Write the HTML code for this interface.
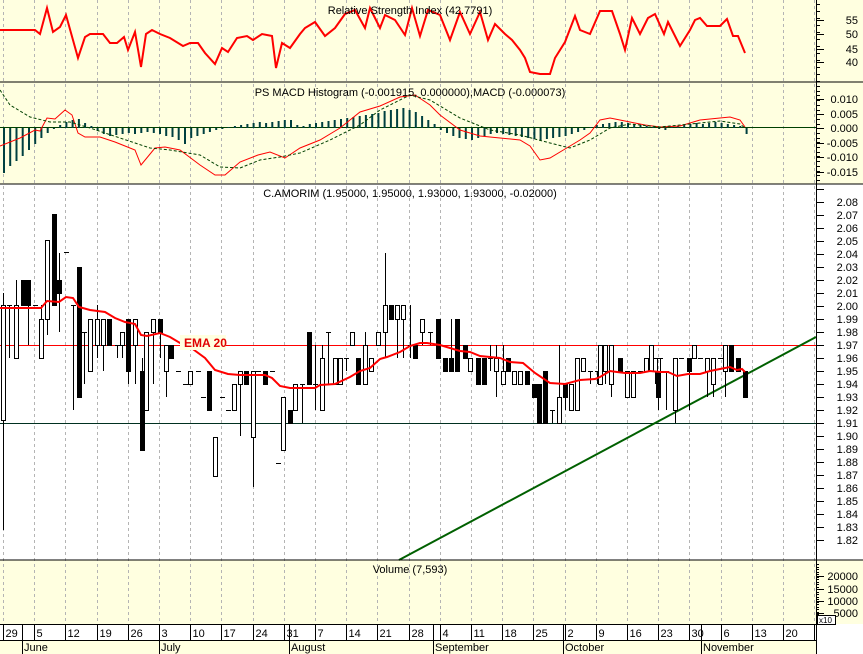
<!DOCTYPE html>
<html><head><meta charset="utf-8"><style>
html,body{margin:0;padding:0;background:#fff;width:863px;height:654px;overflow:hidden}
svg{display:block}
text{font-family:"Liberation Sans",Arial,sans-serif;font-size:11px;fill:#000}
</style></head><body>
<svg id="c" width="863" height="654" xmlns="http://www.w3.org/2000/svg">
<rect x="0" y="0" width="863" height="82" fill="#ffffe0"/>
<rect x="0" y="82" width="863" height="102" fill="#ffffe0"/>
<rect x="0" y="184" width="863" height="376" fill="#fff"/>
<rect x="0" y="560" width="863" height="64" fill="#ffffe0"/>
<rect x="0" y="624" width="816" height="16" fill="#fff"/>
<rect x="0" y="640" width="816" height="14" fill="#ffffe0"/>
<g id="grid"></g>
<g id="dyn"></g>
<line x1="0" y1="82" x2="863" y2="82" stroke="#000"/>
<line x1="0" y1="184" x2="863" y2="184" stroke="#000"/>
<line x1="0" y1="560" x2="863" y2="560" stroke="#000"/>
<line x1="0" y1="624.5" x2="816" y2="624.5" stroke="#000"/>
<line x1="0" y1="640.5" x2="816" y2="640.5" stroke="#000"/>
<line x1="816.5" y1="0" x2="816.5" y2="654" stroke="#000"/>
<text x="410" y="14" text-anchor="middle">Relative Strength Index (42.7791)</text>
<text x="410" y="96" text-anchor="middle">PS MACD Histogram (-0.001915, 0.000000),MACD (-0.000073)</text>
<text x="410" y="197" text-anchor="middle">C.AMORIM (1.95000, 1.95000, 1.93000, 1.93000, -0.02000)</text>
<text x="410" y="573" text-anchor="middle">Volume (7,593)</text>
<rect x="180" y="335" width="46" height="15" fill="#ffffe0"/>
<text x="184" y="347" style="font-weight:bold;font-size:12px;fill:#e00000">EMA 20</text>
<rect x="817.5" y="615.5" width="18" height="9" fill="#fff" stroke="#000"/>
<text x="819" y="623" style="font-size:8px">x10</text>
</svg>
<script>
var NS="http://www.w3.org/2000/svg",G=document.getElementById('grid'),D=document.getElementById('dyn');
function el(p,t,a){var e=document.createElementNS(NS,t);for(var k in a)e.setAttribute(k,a[k]);p.appendChild(e);return e}
function txt(p,x,y,s,anc){var e=el(p,'text',{x:x,y:y});if(anc)e.setAttribute('text-anchor',anc);e.textContent=s;return e}
// grid
for(var i=0;i<27;i++){var x=Math.round(3+31.2*i)+.5;
 el(G,'line',{x1:x,y1:0,x2:x,y2:624,stroke:'#b4b4b4','stroke-dasharray':'3,3'});}
// week row
var wk=["29","5","12","19","26","3","10","17","24","31","7","14","21","28","4","11","18","25","2","9","16","23","30","6","13","20"];
for(var i=0;i<27;i++){var x=Math.round(3+31.2*i)+.5;el(D,'line',{x1:x,y1:624,x2:x,y2:640,stroke:'#000'});if(i<26)txt(D,x+2,637,wk[i]);}
var mo=[[22,"June"],[159,"July"],[289,"August"],[433,"September"],[563,"October"],[701,"November"]];
mo.forEach(function(m){el(D,'line',{x1:m[0]+.5,y1:624,x2:m[0]+.5,y2:654,stroke:'#000'});txt(D,m[0]+2,651,m[1]);});
// axes ticks & labels
function tick(y,len){el(D,'line',{x1:816,y1:y+.5,x2:816+len,y2:y+.5,stroke:'#000'})}
for(var y=4;y<82;y+=7)tick(y,4);
[[55,20],[50,34],[45,49],[40,62]].forEach(function(a){tick(a[1],8);txt(D,858,a[1]+4,a[0],'end')});
for(var y=86;y<184;y+=4.7)tick(Math.round(y),4);
[["0.010",99],["0.005",114],["0.000",128],["-0.005",143],["-0.010",157],["-0.015",172]].forEach(function(a){tick(a[1],8);txt(D,858,a[1]+4,a[0],'end')});
function py(p){return 345+(1.97-p)*1300}
for(var k=0;k<=27;k++){var p=2.09-k*0.01;var y=Math.round(py(p));if(y<188||y>558)continue;tick(y,8);if(p<=2.085&&p>=1.815)txt(D,858,y+4,p.toFixed(2),'end');}
for(var y=564;y<624;y+=2.5)tick(Math.round(y),3);
[["20000",576],["15000",589],["10000",601],["5000",613]].forEach(function(a){tick(a[1],8);txt(D,858,a[1]+4,a[0],'end')});
// RSI
var rsi=[[0,30],[35,30],[40,34],[47,8],[53,32],[60,27],[66,15],[78,58],[85,37],[90,34],[103,34],[110,43],[117,43],[124,37],[128,50],[135,32],[141,67],[146,34],[152,30],[160,34],[170,38],[183,46],[190,43],[198,43],[205,53],[215,64],[222,48],[228,52],[237,38],[247,36],[253,40],[262,34],[272,36],[276,68],[282,43],[290,48],[300,34],[305,28],[315,22],[325,36],[335,28],[345,14],[355,10],[365,28],[370,8],[380,28],[385,15],[395,20],[405,35],[412,8],[420,36],[428,10],[440,15],[450,40],[460,12],[470,34],[480,12],[488,40],[495,24],[505,34],[512,40],[520,50],[525,58],[530,72],[540,74],[550,74],[555,58],[565,42],[575,16],[580,30],[590,34],[600,11],[612,11],[620,34],[625,50],[632,18],[640,34],[648,18],[655,14],[664,34],[668,22],[680,46],[690,30],[695,20],[700,18],[707,26],[720,26],[727,19],[733,36],[738,36],[745,53]];
function pl(pts,a){a.points=pts.map(function(p){return p.join(',')}).join(' ');a.fill='none';return el(D,'polyline',a)}
pl(rsi,{stroke:'#f00','stroke-width':2});
// MACD histogram
el(D,'line',{x1:0,y1:127.5,x2:816,y2:127.5,stroke:'#004000'});
var hv=[-45,-38,-33,-28,-22,-16,-10,-5,-1,3,6,8,9,5,2,-3,-6,-8,-7,-6,-5,-6,-5,-4,-5,-6,-8,-9,-12,-16,-10,-8,-6,-4,-2,-1,1,2,3,4,5,6,5,6,7,8,8,3,2,4,5,6,7,8,9,10,11,12,13,14,15,17,18,19,20,18,16,12,8,4,-2,-5,-8,-10,-11,-12,-10,-8,-6,-5,-6,-7,-8,-9,-10,-11,-12,-11,-10,-9,-8,-6,-4,-2,1,3,4,5,6,6,5,4,3,2,1,-1,-2,1,2,3,4,5,4,5,6,5,4,3,2,-6];
for(var d=0;d<hv.length;d++){var x=3+d*6.24;var h=hv[d];el(D,'rect',{x:x.toFixed(1),y:h<0?128:128-h,width:2,height:Math.abs(h)||1,fill:'#004040'});}
pl([[0,146],[20,138],[35,130],[40,131],[47,118],[55,119],[65,110],[72,115],[78,133],[85,137],[100,137],[115,142],[125,146],[135,150],[141,165],[155,148],[165,147],[180,150],[200,165],[215,175],[225,175],[240,162],[258,155],[270,152],[285,158],[300,148],[320,140],[340,128],[360,112],[380,106],[400,97],[415,95],[430,105],[440,115],[460,130],[480,136],[500,138],[520,140],[530,146],[540,160],[550,158],[570,146],[580,140],[590,133],[600,120],[610,118],[630,122],[645,125],[660,127],[680,126],[700,120],[720,118],[730,117],[740,120],[745,127]],{stroke:'#f00','stroke-width':1});
pl([[0,90],[10,105],[30,117],[50,122],[70,122],[90,128],[120,138],[150,148],[170,150],[200,155],[220,167],[240,168],[260,160],[280,157],[300,153],[330,140],[360,125],[380,110],[410,95],[430,100],[460,118],[490,130],[520,135],[550,143],[570,148],[590,140],[610,128],[630,124],[660,127],[690,124],[720,121],[740,124],[745,128]],{stroke:'#004000','stroke-width':1,'stroke-dasharray':'3,2'});
// price lines
el(D,'line',{x1:0,y1:345.5,x2:816,y2:345.5,stroke:'#f00'});
el(D,'line',{x1:0,y1:423.5,x2:816,y2:423.5,stroke:'#003020'});
el(D,'line',{x1:399,y1:560,x2:816,y2:337,stroke:'#006000','stroke-width':2});
// candles: x, bodyTop, bodyBot, high, low, filled(1)/hollow(0)/tick(2)
var C=[[3,305,420,293,530,0],[9,305,306,305,358,2],[16,305,358,280,358,0],[23,280,305,280,305,1],[28,280,305,280,345,1],[35,305,306,305,306,2],[41,319,358,305,358,0],[47,240,319,240,335,0],[54,214,305,214,305,1],[59,280,293,253,332,1],[66,252,253,252,253,2],[73,305,306,305,410,2],[79,267,397,267,397,1],[84,332,333,332,384,2],[90,319,371,319,371,0],[97,319,345,305,358,0],[103,319,345,319,371,0],[109,319,345,319,345,1],[117,345,346,345,358,2],[122,332,345,332,358,0],[128,319,371,319,384,1],[135,319,345,319,384,0],[142,371,450,358,450,1],[146,332,410,332,410,0],[153,319,332,319,384,0],[160,319,332,319,358,1],[166,345,371,345,397,0],[171,345,358,345,358,1],[178,371,372,371,372,2],[185,384,385,384,385,2],[190,371,384,371,384,0],[198,371,372,371,372,2],[203,397,398,397,398,2],[209,371,410,371,410,1],[215,437,476,437,476,0],[222,397,398,397,398,2],[228,410,411,410,411,2],[234,384,410,384,410,0],[240,371,384,371,436,0],[246,371,384,371,384,1],[253,371,437,371,487,0],[258,371,372,371,372,2],[265,371,384,371,384,1],[272,371,372,371,372,2],[278,463,464,463,464,2],[283,397,450,397,450,0],[290,410,423,410,423,1],[295,384,410,384,410,0],[302,384,385,384,423,2],[309,332,384,332,384,1],[315,384,385,345,410,2],[322,358,410,345,410,0],[328,332,333,332,384,2],[335,358,384,358,384,0],[340,358,384,358,384,0],[346,358,359,358,371,2],[352,332,345,332,345,0],[358,358,384,358,384,1],[365,345,384,332,384,0],[371,358,371,358,371,0],[378,332,345,332,345,0],[385,305,332,253,358,0],[391,305,319,305,319,1],[397,305,319,305,358,0],[403,305,319,305,358,0],[410,345,346,305,358,2],[415,345,358,345,358,1],[422,319,332,319,345,0],[430,332,333,332,345,2],[438,319,358,319,358,1],[445,358,371,358,371,1],[451,358,371,319,371,1],[457,319,371,319,371,1],[465,345,358,345,358,1],[470,358,371,358,371,0],[478,358,384,358,384,1],[484,358,384,358,384,1],[490,358,359,345,371,2],[496,358,371,345,397,0],[503,371,384,345,384,0],[508,358,371,358,371,1],[514,371,384,371,384,0],[520,371,384,371,384,0],[527,371,384,371,384,1],[534,384,397,384,397,1],[539,384,423,384,423,1],[545,371,423,371,423,1],[552,410,411,410,423,2],[559,397,423,345,423,0],[565,384,397,384,410,1],[571,384,410,384,410,0],[577,358,410,358,410,0],[583,358,371,358,371,0],[590,371,372,371,384,2],[597,371,372,371,384,2],[600,345,384,345,384,0],[605,345,371,345,384,0],[611,345,384,345,397,0],[620,358,371,358,371,1],[627,371,397,371,397,0],[633,371,397,371,397,0],[640,371,372,371,372,2],[646,358,371,358,371,0],[651,345,371,345,371,0],[655,358,371,358,384,0],[660,358,359,358,384,2],[658,371,397,371,410,1],[666,371,372,371,410,2],[675,358,410,358,423,0],[681,358,359,358,359,2],[689,358,371,358,410,1],[694,345,358,345,358,0],[700,358,359,358,359,2],[707,358,371,358,397,0],[713,358,384,358,397,0],[720,358,359,358,359,2],[725,345,371,345,397,0],[731,345,371,345,371,1],[738,358,371,358,371,1],[745,371,397,371,397,1]];
C.forEach(function(c){var x=c[0];
 el(D,'line',{x1:x+.5,y1:c[3],x2:x+.5,y2:c[4],stroke:'#000'});
 if(c[5]==2){el(D,'line',{x1:x-2,y1:c[1]+.5,x2:x+3,y2:c[1]+.5,stroke:'#000'});}
 else el(D,'rect',{x:x-1.5,y:c[1]+.5,width:4,height:Math.max(1,c[2]-c[1]),fill:c[5]?'#000':'#fff',stroke:'#000'});
});
pl([[0,308],[41,308],[47,301],[59,302],[66,297],[73,298],[79,307],[90,310],[105,312],[115,318],[125,322],[135,324],[141,335],[147,336],[160,333],[170,337],[180,343],[190,347],[205,358],[215,370],[228,374],[240,375],[265,375],[272,378],[280,386],[290,388],[315,388],[320,385],[335,384],[350,377],[360,371],[370,368],[380,359],[387,357],[400,352],[410,346],[420,343],[427,343],[440,345],[450,348],[460,351],[470,352],[480,356],[490,357],[500,358],[510,362],[523,363],[535,373],[550,383],[565,384],[580,380],[595,379],[600,377],[610,371],[617,372],[625,373],[640,373],[650,371],[660,372],[668,372],[677,376],[688,374],[700,374],[710,371],[720,369],[730,367],[737,370],[742,369],[745,372]],{stroke:'#f00','stroke-width':2});
// volume
var spikes={30:565,62:596,110:613,114:611,101:610,118:599,51:619,12:614,22:616,23:617,13:619,91:619,94:619,104:617,105:616,96:617};
for(var d=0;d<120;d++){var x=3+d*6.24;var h=((d*37)%7)+1;var top=624-h;if(spikes[d])top=spikes[d];if(d%4==3)top=622;
 el(D,'rect',{x:x.toFixed(1),y:top,width:2,height:624-top,fill:'#006000'});}
</script>
</body></html>
